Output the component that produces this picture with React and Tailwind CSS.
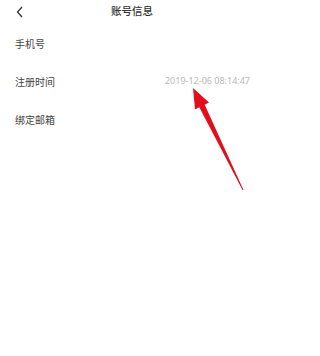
import React from "react";

const rows = [
  { label: "手机号", value: "" },
  { label: "注册时间", value: "2019-12-06 08:14:47" },
  { label: "绑定邮箱", value: "" },
];

const App = () => {
  return (
    <div
      className="relative w-[264px] h-[356px] bg-white overflow-hidden"
      style={{ fontFamily: '"Noto Sans CJK SC", "Noto Sans", sans-serif' }}
    >
      {/* header */}
      <div className="relative flex items-center justify-center h-[24px]">
        <svg className="absolute left-[15px] top-[6px]" width="10" height="12" viewBox="0 0 10 12">
          <path d="M7 1 L2.5 6 L7 11" fill="none" stroke="#333" strokeWidth="1.3" />
        </svg>
        <span className="text-[10.5px] font-medium text-[#333] -mt-[2px]">账号信息</span>
      </div>

      {rows.map((r) => (
        <div key={r.label} className="flex items-center justify-between h-[38px] pl-[15px] pr-[14px]">
          <span className="text-[10px] text-[#444]">{r.label}</span>
          <span className="text-[9px] text-[#b8b8b8]" style={{ fontFamily: '"Noto Sans", sans-serif' }}>
            {r.value}
          </span>
        </div>
      ))}

      {/* red annotation arrow */}
      <svg className="absolute left-0 top-0" width="264" height="356" viewBox="0 0 264 356">
        <defs>
          <filter id="blur" x="-20%" y="-20%" width="140%" height="140%">
            <feGaussianBlur stdDeviation="0.6" />
          </filter>
        </defs>
        <polygon
          points="193,88 209,102.5 204.7,104.7 243.5,190 242.5,190 199.3,107.3 195,109.5"
          fill="#e3101c"
          filter="url(#blur)"
        />
      </svg>
    </div>
  );
};

export default App;
